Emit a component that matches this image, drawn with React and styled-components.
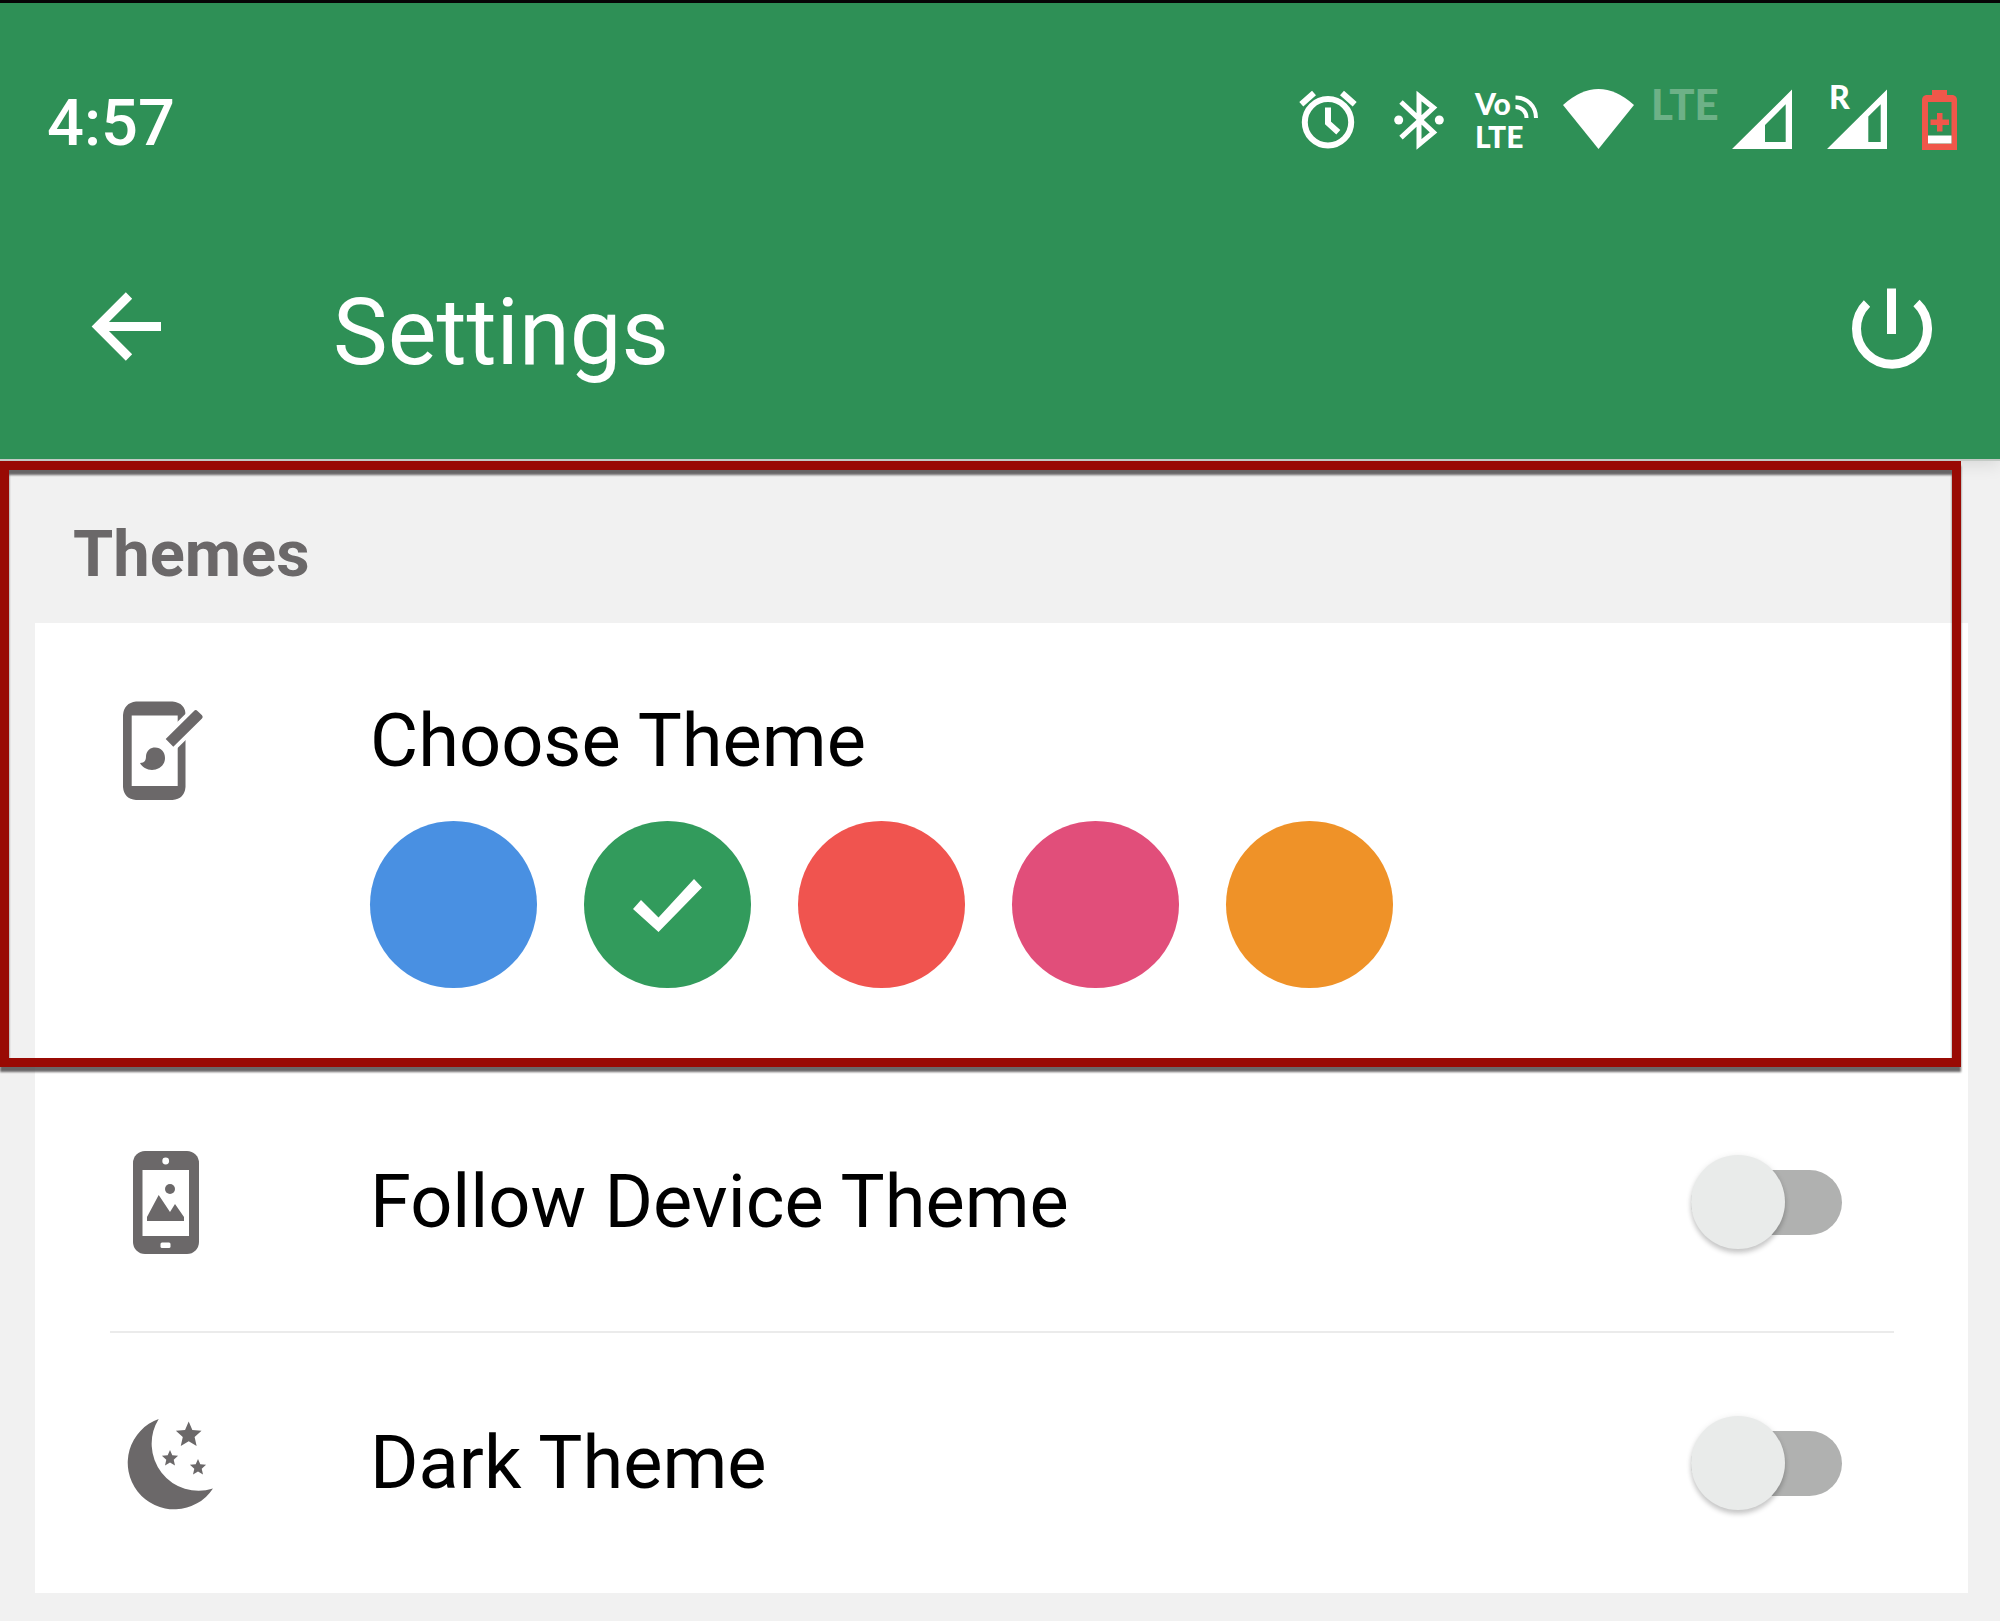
import React, { useState } from "react";
import styled, { createGlobalStyle } from "styled-components";

const GlobalStyle = createGlobalStyle`
  * {
    box-sizing: border-box;
  }
  body {
    margin: 0;
    background: #f1f1f1;
    font-family: Roboto, "Liberation Sans", sans-serif;
  }
`;

const Header = styled.header`
  background: #2e9056;
  border-top: 3px solid #060606;
  color: #fff;
  box-shadow: 0 2px 0 #c3cac5, 0 6px 16px rgba(0, 0, 0, 0.1);
`;

const StatusBar = styled.div`
  display: flex;
  align-items: center;
  justify-content: space-between;
  padding: 72px 43px 0 47px;
`;

const Clock = styled.time`
  font-size: 65px;
  line-height: 80px;
  font-weight: 500;
`;

const StatusIcons = styled.div`
  display: flex;
`;

const StatusIcon = styled.svg`
  display: block;
  height: 96px;
  fill: #fff;
  font-family: Lato, sans-serif;
  font-weight: 900;
`;

const Toolbar = styled.div`
  display: flex;
  align-items: center;
  padding: 107px 68px 71px 91px;
`;

const IconButton = styled.button`
  padding: 0;
  border: 0;
  background: none;
  color: inherit;
  cursor: pointer;

  svg {
    display: block;
    height: 110px;
    fill: none;
    stroke: currentColor;
    stroke-width: 9;
  }
`;

const Title = styled.h1`
  flex: 1;
  margin: 0 0 0 172px;
  font-size: 92px;
  line-height: 110px;
  font-weight: 400;
`;

// Red frame with its drop shadow around the theme section
const Highlighted = styled.section`
  position: relative;

  &::after {
    content: "";
    position: absolute;
    top: 2px;
    right: 39px;
    bottom: 5px;
    left: 0;
    border: 9px solid #990a04;
    filter: drop-shadow(0 5px 1px rgba(80, 76, 78, 0.85));
    pointer-events: none;
  }
`;

const SectionTitle = styled.h2`
  margin: 0;
  padding: 57px 73px 31px;
  color: #6b6869;
  font-size: 65px;
  line-height: 76px;
  font-weight: 700;
`;

const Card = styled.div`
  margin: 0 32px 0 35px;
  background: #fff;
`;

const ThemeRow = styled.div`
  display: flex;
  align-items: flex-start;
  gap: 157px;
  padding: 74px 88px 84px;
`;

const SwitchRow = styled.label`
  display: flex;
  align-items: center;
  gap: 157px;
  min-height: 260px;
  padding: 0 126px 0 88px;
  cursor: pointer;
`;

const Divider = styled.hr`
  height: 2px;
  margin: -1px 74px 0 75px;
  border: 0;
  background: #ebebeb;
`;

const RowIcon = styled.svg`
  display: block;
  flex: none;
  width: 90px;
  height: 104px;
  fill: #6b6869;
`;

const RowTitle = styled.span`
  flex: 1;
  color: #000;
  font-size: 74px;
  line-height: 88px;
`;

const ThemePicker = styled.fieldset`
  flex: 1;
  min-width: 0;
  margin: 0;
  padding: 0;
  border: 0;

  legend {
    padding: 0;
    color: #000;
    font-size: 74px;
    line-height: 88px;
  }
`;

const Swatches = styled.div`
  display: flex;
  gap: 47px;
  margin-top: 36px;
`;

const Swatch = styled.label`
  display: grid;
  place-items: center;
  width: 167px;
  height: 167px;
  cursor: pointer;

  input,
  svg {
    grid-area: 1 / 1;
  }

  input {
    appearance: none;
    width: 100%;
    height: 100%;
    margin: 0;
    border-radius: 50%;
    background: ${(props) => props.$color};
    cursor: pointer;
  }

  svg {
    fill: #fff;
    pointer-events: none;
  }
`;

const Switch = styled.input`
  appearance: none;
  display: grid;
  align-items: center;
  width: 151px;
  height: 94px;
  margin: 0;
  cursor: pointer;

  &::before,
  &::after {
    content: "";
    grid-area: 1 / 1;
  }

  &::before {
    justify-self: center;
    width: 151px;
    height: 65px;
    border-radius: 33px;
    background: ${(props) => (props.checked ? "#96c7aa" : "#b0b1b0")};
  }

  &::after {
    justify-self: ${(props) => (props.checked ? "end" : "start")};
    width: 94px;
    height: 94px;
    border-radius: 50%;
    background: ${(props) => (props.checked ? "#2e9056" : "#e9ebea")};
    box-shadow: 0 4px 5px rgba(0, 0, 0, 0.2), 0 0 6px rgba(0, 0, 0, 0.06);
  }
`;

const themes = [
  { name: "Blue", color: "#4990e2" },
  { name: "Green", color: "#329b5c" },
  { name: "Red", color: "#f0544f" },
  { name: "Pink", color: "#e14e7a" },
  { name: "Orange", color: "#ef9228" },
];

const star = (cx, cy, r) => {
  const points = [];
  for (let i = 0; i < 10; i++) {
    const radius = i % 2 ? r * 0.46 : r;
    const angle = (Math.PI / 5) * i - Math.PI / 2;
    points.push(
      `${cx + radius * Math.cos(angle)},${cy + radius * Math.sin(angle)}`
    );
  }
  return points.join(" ");
};

const AlarmIcon = () => (
  <StatusIcon width="85" viewBox="0 -8 85 96">
    <g fill="none" stroke="#fff" strokeWidth="6">
      <circle cx="38" cy="39.3" r="23.2" />
      <path d="M38 24.5V40L48.3 49.3M11.3 21.3 24 10M52 10l12.7 11.3" />
    </g>
  </StatusIcon>
);

const BluetoothIcon = () => (
  <StatusIcon width="84" viewBox="0 -8 84 96">
    <path
      d="M26 19 58.5 49.3 44 61.5V13L58.5 24.7 26 54.7"
      fill="none"
      stroke="#fff"
      strokeWidth="5"
    />
    <circle cx="23.7" cy="37" r="4.5" />
    <circle cx="64.3" cy="37" r="4.5" />
  </StatusIcon>
);

const VolteIcon = () => (
  <StatusIcon width="92" viewBox="0 -8 92 96">
    <text fontSize="30">
      <tspan x="16" y="32">
        Vo
      </tspan>
      <tspan x="16" y="65">
        LTE
      </tspan>
    </text>
    <path
      d="M56.5 14.5C68 14.5 77 23 77 35M56.5 24C63 24 67.5 29 67.5 35"
      fill="none"
      stroke="#fff"
      strokeWidth="4"
    />
  </StatusIcon>
);

const WifiIcon = () => (
  <StatusIcon width="93" viewBox="0 -8 93 96">
    <path d="M12 22Q47.5-10 83 22L47.5 66Z" />
  </StatusIcon>
);

const LteLabel = () => (
  <StatusIcon width="83" viewBox="0 -8 83 96">
    <text x="7" y="37" fontSize="42" fill="#6db187">
      LTE
    </text>
  </StatusIcon>
);

const SignalIcon = () => (
  <StatusIcon width="83" viewBox="0 -8 83 96">
    <path fillRule="evenodd" d="M5 66H65V6.5ZM38 42 58.7 21.3V59H38Z" />
  </StatusIcon>
);

const RoamingIcon = () => (
  <StatusIcon width="95" viewBox="0 -8 95 96">
    <path fillRule="evenodd" d="M17 66H77V6.5ZM58.3 33.5 70.7 21.3V59H58.3Z" />
    <text x="19" y="26" fontSize="32">
      R
    </text>
  </StatusIcon>
);

const BatteryIcon = () => (
  <StatusIcon width="52" viewBox="0 -8 52 96">
    <path
      fill="#f0574a"
      fillRule="evenodd"
      d="M27 7H42V12H48Q52 13 52 17V67H17V17Q17 13 21 12H27ZM23 19V60.5H46.5V19Z"
    />
    <path
      fill="#f0574a"
      d="M32 30h5.5v6.500H44V42H37.5v6.500H32V42H25.5V36.500H32Z"
    />
    <path d="M23 52.5H46.5V60.5H23Z" />
  </StatusIcon>
);

const ThemeIcon = () => (
  <RowIcon viewBox="0 0 90 104">
    <path
      fillRule="evenodd"
      d="M13 4.5H49.5Q62.5 6 62.5 18V90Q61.5 102 49.5 103H13Q1 102 0 90V18Q1 6 13 4.5ZM8.7 18.5V89H54.7V18.5Z"
    />
    <path
      d="M71 14Q72.7 12 74.5 14L79 18.2Q80.5 20 79 21.5L50.3 49.7 42.7 42Z"
      stroke="#fff"
      strokeWidth="8"
    />
    <path d="M71 14Q72.7 12 74.5 14L79 18.2Q80.5 20 79 21.5L50.3 49.7 42.7 42Z" />
    <path d="M17 66C22 66 23 63 23 59 23.5 53 28 50.5 32 50.5 38 50.5 42 55 42 61 42 69 35 73 29 73 24 73 19 70 17 66Z" />
  </RowIcon>
);

const DeviceIcon = () => (
  <RowIcon viewBox="0 0 90 104">
    <rect x="10" y="1" width="66" height="103" rx="12" />
    <g fill="#fff">
      <rect x="19.5" y="20" width="46.5" height="66" />
      <circle cx="42.7" cy="11" r="3.4" />
      <rect x="37.5" y="92.5" width="10" height="5.5" rx="1.5" />
    </g>
    <circle cx="47" cy="39" r="5" />
    <path d="M24 71V67L35.7 45 47 62 52 54 61 67V71Z" />
  </RowIcon>
);

const MoonIcon = () => (
  <RowIcon viewBox="0 0 90 104">
    <path d="M35.7 8A46.500 46.500 0 1 0 90 77.5 47 47 0 0 1 35.7 8Z" />
    <polygon points={star(65.7, 24, 13.5)} />
    <polygon points={star(47, 47.5, 8.5)} />
    <polygon points={star(75, 56.5, 8.5)} />
  </RowIcon>
);

const App = () => {
  const [theme, setTheme] = useState("Green");
  const [followDevice, setFollowDevice] = useState(false);
  const [dark, setDark] = useState(false);

  return (
    <>
      <GlobalStyle />
      <Header>
        <StatusBar>
          <Clock>4:57</Clock>
          <StatusIcons>
            <AlarmIcon />
            <BluetoothIcon />
            <VolteIcon />
            <WifiIcon />
            <LteLabel />
            <SignalIcon />
            <RoamingIcon />
            <BatteryIcon />
          </StatusIcons>
        </StatusBar>
        <Toolbar>
          <IconButton type="button" aria-label="Back">
            <svg width="70" viewBox="0 0 70 110">
              <path d="M38 17.5 7 48.5 38 79.5M8 48.5H70" />
            </svg>
          </IconButton>
          <Title>Settings</Title>
          <IconButton type="button" aria-label="Power">
            <svg width="80" viewBox="0 0 80 110">
              <path d="M15 25.5A35.5 35.5 0 1 0 64.5 25M39.5 10.5V56" />
            </svg>
          </IconButton>
        </Toolbar>
      </Header>
      <main>
        <Highlighted>
          <SectionTitle>Themes</SectionTitle>
          <Card>
            <ThemeRow>
              <ThemeIcon />
              <ThemePicker>
                <legend>Choose Theme</legend>
                <Swatches>
                  {themes.map(({ name, color }) => (
                    <Swatch key={name} $color={color}>
                      <input
                        type="radio"
                        name="theme"
                        aria-label={name}
                        checked={theme === name}
                        onChange={() => setTheme(name)}
                      />
                      {theme === name && (
                        <svg width="70" height="54" viewBox="0 0 70 54">
                          <path d="M0 31 8 22 25.500 39.500 61 1 69 9.500 25.500 54Z" />
                        </svg>
                      )}
                    </Swatch>
                  ))}
                </Swatches>
              </ThemePicker>
            </ThemeRow>
          </Card>
        </Highlighted>
        <Card>
          <SwitchRow>
            <DeviceIcon />
            <RowTitle>Follow Device Theme</RowTitle>
            <Switch
              type="checkbox"
              checked={followDevice}
              onChange={(e) => setFollowDevice(e.target.checked)}
            />
          </SwitchRow>
          <Divider />
          <SwitchRow>
            <MoonIcon />
            <RowTitle>Dark Theme</RowTitle>
            <Switch
              type="checkbox"
              checked={dark}
              onChange={(e) => setDark(e.target.checked)}
            />
          </SwitchRow>
        </Card>
      </main>
    </>
  );
};

export default App;
